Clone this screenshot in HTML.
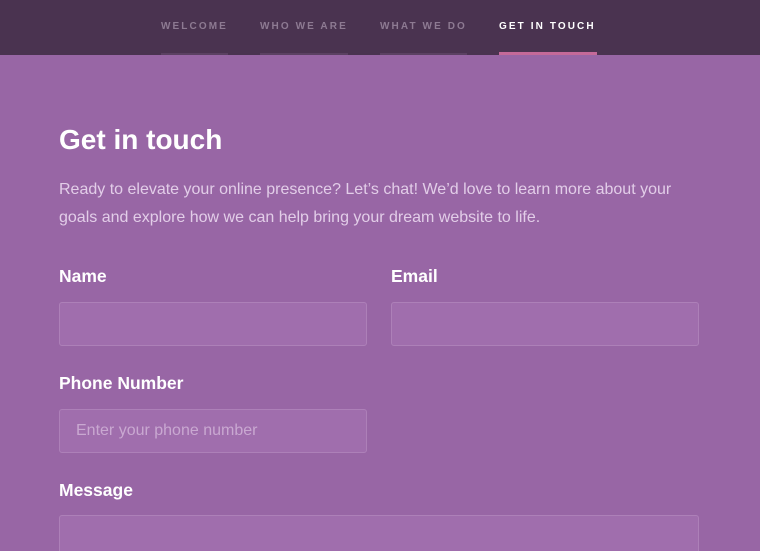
<!DOCTYPE html>
<html><head><style>
*{margin:0;padding:0;box-sizing:border-box}
html,body{width:760px;height:551px;overflow:hidden}
body{background:#9866a5;font-family:"Liberation Sans",sans-serif;position:relative}
nav{height:55px;background:#4a3350;position:relative}
nav a{position:absolute;top:21px;font-size:10px;font-weight:bold;letter-spacing:2.1px;color:#8d7a92;height:34px;border-bottom:2px solid #5b4162;white-space:nowrap}
nav a.act{color:#fff;border-bottom:3px solid #c46a99}
h1{position:absolute;left:59px;top:124px;font-size:28px;color:#fff;font-weight:bold}
p{position:absolute;left:59px;top:176px;width:650px;font-size:16px;line-height:28px;color:#e2cde8}
label{position:absolute;font-size:17.5px;font-weight:bold;color:#fff}
.in{position:absolute;width:308px;height:44px;background:#a06ead;border:1px solid #ad80b8;border-radius:3px;font-size:16px;color:#c9a8d1;padding:12px 16px}
</style></head><body>
<nav>
<a style="left:161px;width:67px">WELCOME</a>
<a style="left:260px;width:88px">WHO WE ARE</a>
<a style="left:380px;width:87px">WHAT WE DO</a>
<a class="act" style="left:499px;width:98px">GET IN TOUCH</a>
</nav>
<h1>Get in touch</h1>
<p>Ready to elevate your online presence? Let’s chat! We’d love to learn more about your goals and explore how we can help bring your dream website to life.</p>
<label style="left:59px;top:266px">Name</label>
<label style="left:391px;top:266px">Email</label>
<div class="in" style="left:59px;top:302px"></div>
<div class="in" style="left:391px;top:302px"></div>
<label style="left:59px;top:373px">Phone Number</label>
<div class="in" style="left:59px;top:409px">Enter your phone number</div>
<label style="left:59px;top:480px">Message</label>
<div class="in" style="left:59px;top:515px;width:640px;height:60px"></div>
</body></html>
